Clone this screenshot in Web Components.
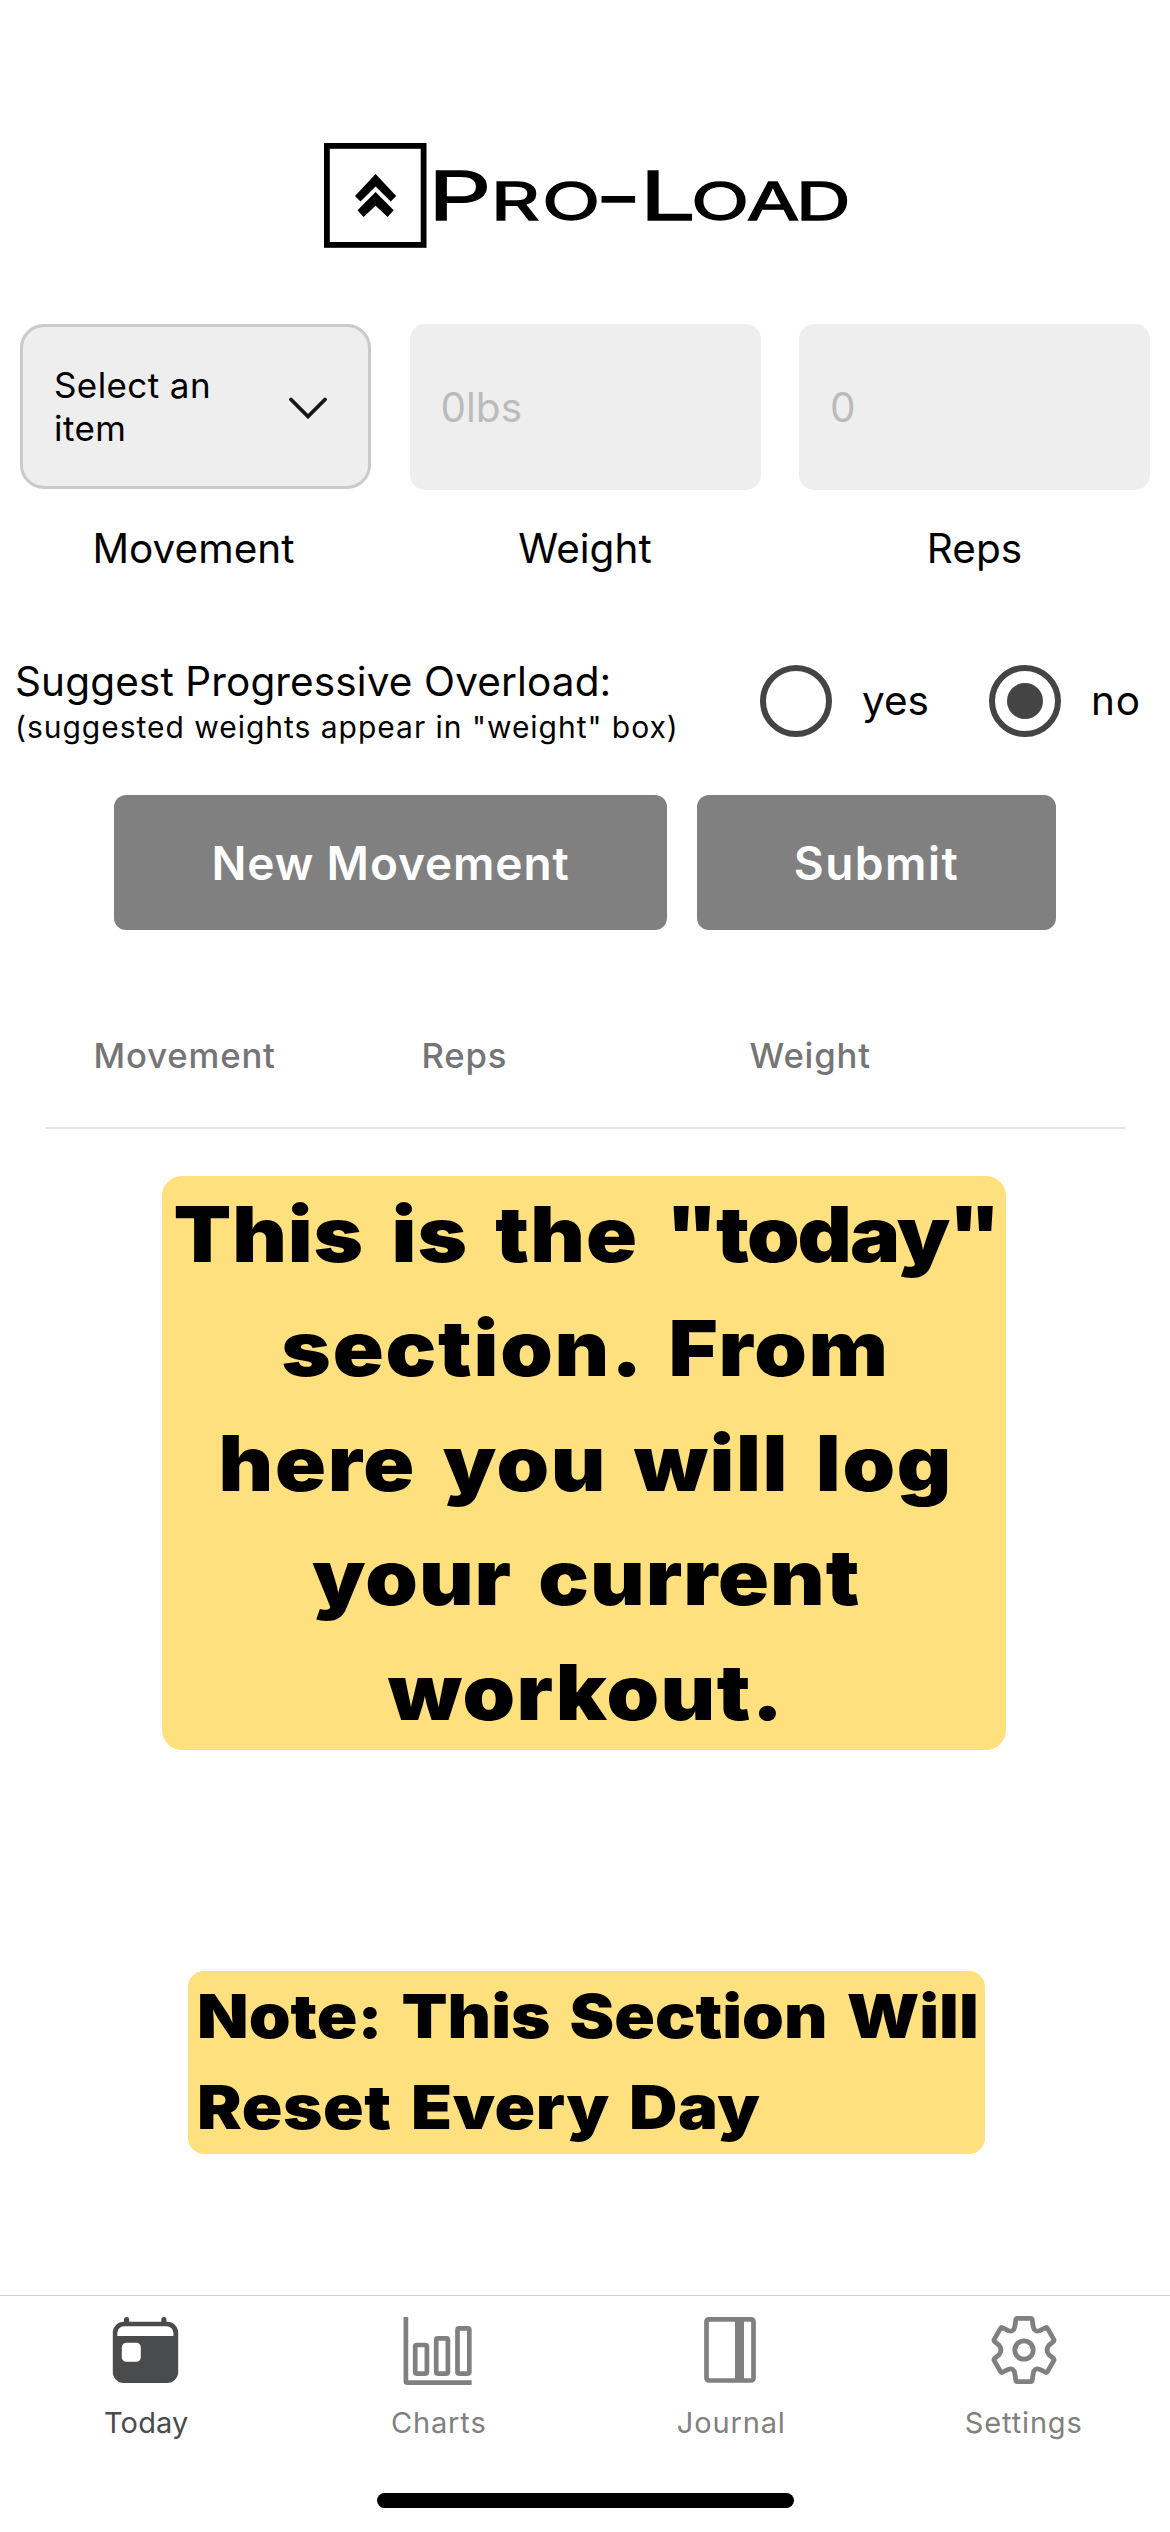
<!DOCTYPE html>
<html lang="en">
<head>
<meta charset="utf-8">
<title>Pro-Load</title>
<style>
  body { margin: 0; background: #fff; color: #000; font-family: Inter, "Liberation Sans", sans-serif; }
</style>
</head>
<body>
<pro-load-app></pro-load-app>
<script>
const define = (name, html, setup) => customElements.define(name, class extends HTMLElement {
  constructor() {
    super();
    this.attachShadow({ mode: 'open' }).innerHTML = html;
  }
  connectedCallback() { if (setup) setup.call(this, this.shadowRoot); }
});

define('brand-logo', `
  <style>
    :host { display: block; height: 181px; padding: 143px 0 0 324px; }
    svg { display: block; overflow: visible; }
    text { font-family: Inter, sans-serif; font-weight: 400; font-size: 67px; stroke: #000; stroke-width: 1.3px; }
    .s { font-size: 51.5px; }
  </style>
  <svg width="530" height="106" viewBox="0 0 530 106">
    <rect x="2.9" y="2.9" width="96.7" height="99" fill="none" stroke="#000" stroke-width="5.8"/>
    <path d="M51.6 31 72.2 53 66.7 58.5 51.6 43.5 36.5 58.5 31 53Z"/>
    <path d="M51.6 49 69.7 67.3 63.6 74 51.6 62.7 39.6 74 33.5 67.3Z"/>
    <text transform="scale(1.48 1)" x="70.2 112.6 147.3 183.5 213.3 248 285.6 318.8" y="77">P<tspan class="s">RO</tspan>-L<tspan class="s">OAD</tspan></text>
  </svg>`);

define('entry-field', `
  <style>
    :host { display: flex; flex-direction: column; color: #000; }
    .box { box-sizing: border-box; height: 166px; border-radius: 15px; background: #eee; color: #bbbbbe;
           display: flex; align-items: center; padding: 2px 0 0 31px; font-size: 40.5px; line-height: 50px; }
    .label { margin-top: 34px; font-size: 40.5px; line-height: 50px; text-align: center; }
    :host([select]) .box { height: 165px; margin-bottom: 1px; border: 3px solid #cacaca; border-radius: 24px; color: #000;
           font-size: 35px; line-height: 43px; letter-spacing: .4px; padding: 0 41px 0 31px; justify-content: space-between; }
    svg { display: none; }
    :host([select]) svg { display: block; margin-top: 2px; }
    :host([select]) .label { padding-right: 4px; }
  </style>
  <div class="box"><slot></slot>
    <svg width="38" height="22" viewBox="0 0 38 22"><path d="M2 2.5 19 19.5 36 2.5" fill="none" stroke="#151515" stroke-width="3.8" stroke-linecap="round"/></svg>
  </div>
  <div class="label"></div>`,
  function (r) { r.querySelector('.label').textContent = this.getAttribute('label'); });

define('radio-option', `
  <style>
    :host { flex: none; display: flex; align-items: center; width: 229px; gap: 30px; font-size: 40.5px; line-height: 50px; }
    i { box-sizing: border-box; width: 72px; height: 72px; border: 6px solid #444; border-radius: 50%;
        display: grid; place-items: center; }
    :host([checked]) { width: 181px; letter-spacing: .8px; }
    :host([checked]) i::after { content: ""; width: 36px; height: 36px; border-radius: 50%; background: #444; }
  </style>
  <i></i><slot></slot>`);

define('action-button', `
  <style>
    :host { display: flex; align-items: center; justify-content: center; height: 135px; border-radius: 12px;
            background: #808080; color: #fff; font-size: 46px; font-weight: 600; line-height: 56px; }
  </style><slot></slot>`);

define('log-header', `
  <style>
    :host { box-sizing: border-box; display: grid; grid-template-columns: repeat(3, 328px); height: 199px;
            margin: 0 45px; padding: 103.4px 0 0 48.5px; border-bottom: 2px solid #e5e1ef;
            color: #757576; font-size: 34.7px; font-weight: 500; line-height: 44px; letter-spacing: .85px; }
  </style><slot></slot>`);

define('tip-card', `
  <style>
    :host { box-sizing: border-box; display: flex; flex-direction: column; align-items: center;
            background: #ffe07f; font-weight: 900; white-space: nowrap; }
    :host([small]) { align-items: flex-start; }
  </style><slot></slot>`);

define('tip-line', `
  <style>
    :host { display: block; transform: scaleX(1.1); }
  </style><slot></slot>`,
  function () {
    this.style.letterSpacing = this.getAttribute('ls') + 'px';
    this.style.wordSpacing = this.getAttribute('ws') + 'px';
    if (this.parentElement.hasAttribute('small')) this.style.transformOrigin = '0 50%';
  });

const icons = {
  today: `<path fill="currentColor" fill-rule="evenodd" d="M14 7.7V5.5a2.6 2.6 0 0 1 5.2 0V7.7H51.3V5.5a2.6 2.6 0 0 1 5.2 0V7.7H57.2a11 11 0 0 1 11 11V58a11 11 0 0 1-11 11H13.8a11 11 0 0 1-11-11V18.7a11 11 0 0 1 11-11ZM14 12.2a6.7 6.7 0 0 0-6.7 6.7V22H63.4V18.9a6.7 6.7 0 0 0-6.7-6.7ZM16.3 28.7a4.5 4.5 0 0 0-4.5 4.5v10a4.5 4.5 0 0 0 4.5 4.5h10a4.5 4.5 0 0 0 4.5-4.5v-10a4.5 4.5 0 0 0-4.5-4.5Z"/>`,
  charts: `<g fill="none" stroke="currentColor" stroke-width="4.7"><path d="M2.9 3V67.2q0 1.5 1.5 1.5H68.6"/><rect x="12.2" y="31" width="11.7" height="28.6" rx="1.5"/><rect x="33.2" y="24.3" width="11.7" height="35.3" rx="1.5"/><rect x="54.5" y="14.4" width="11.8" height="45.2" rx="1.5"/></g>`,
  journal: `<rect x="11.5" y="5.3" width="47" height="61.2" rx="2.2" fill="none" stroke="currentColor" stroke-width="4.7"/><path fill="currentColor" d="M40 5h9v62h-9z"/>`,
  settings: `<g transform="translate(36 36)" fill="none" stroke="currentColor" stroke-width="4.8" stroke-linejoin="round"><path d="M-6.6-31.7H6.6Q8-31.7 8.2-30.2L9.3-23Q10.4-17.8 15.6-19.3L21.4-22.2Q22.7-22.9 23.5-21.6L29.8-10.6Q30.4-9.4 29.3-8.4L24.8-4.6Q21.4 0 24.8 4.6L29.3 8.4Q30.4 9.4 29.8 10.6L23.5 21.6Q22.7 22.9 21.4 22.2L15.6 19.3Q10.4 17.8 9.3 23L8.2 30.2Q8 31.7 6.6 31.7H-6.6Q-8 31.7-8.2 30.2L-9.3 23Q-10.4 17.8-15.6 19.3L-21.4 22.2Q-22.7 22.9-23.5 21.6L-29.8 10.6Q-30.4 9.4-29.3 8.4L-24.8 4.6Q-21.4 0-24.8-4.6L-29.3-8.4Q-30.4-9.4-29.8-10.6L-23.5-21.6Q-22.7-22.9-21.4-22.2L-15.6-19.3Q-10.4-17.8-9.3-23L-8.2-30.2Q-8-31.7-6.6-31.7Z"/><circle r="9.2"/></g>`
};

define('tab-item', `
  <style>
    :host { display: flex; flex-direction: column; align-items: center; gap: 19px; padding-top: 18px;
            color: #808080; font-size: 29px; line-height: 36px; letter-spacing: .85px; }
    :host([active]) { color: #4a4b4d; letter-spacing: .15px; }
    svg { display: block; }
  </style>
  <svg width="72" height="72" viewBox="0 0 72 72"></svg>
  <slot></slot>`,
  function (r) { r.querySelector('svg').innerHTML = icons[this.getAttribute('icon')]; });

define('tab-bar', `
  <style>
    :host { box-sizing: border-box; display: grid; grid-template-columns: repeat(4, 1fr); height: 198px; border-top: 1px solid #cfcfcf; }
  </style><slot></slot>`);

define('pro-load-app', `
  <style>
    :host { display: flex; flex-direction: column; height: 2532px; overflow: hidden; background: #fff; }
    .fields { display: grid; grid-template-columns: repeat(3, 351px); justify-content: space-between; padding: 0 20px; height: 250px; }
    .overload { display: flex; align-items: center; height: 90px; margin-top: 82px; }
    .copy { flex: none; box-sizing: border-box; width: 760px; padding-left: 15px; white-space: nowrap; }
    .q { font-size: 40.5px; line-height: 52px; letter-spacing: .13px; }
    .hint { font-size: 30px; line-height: 38px; letter-spacing: .98px; }
    .actions { display: grid; grid-template-columns: 553px 359px; gap: 30px; margin: 49px 0 0 114px; }
    .today { width: 844px; height: 574px; margin: 47px 0 0 161.5px; padding: .5px 0 0 5px; border-radius: 20px; font-size: 76.6px; line-height: 114.6px; }
    .tight { letter-spacing: -1.8px; }
    .note { width: 797px; height: 183px; margin: 221px 0 0 188px; padding-left: 8.5px; border-radius: 16px; font-size: 61px; line-height: 91.4px; }
    tab-bar { margin-top: 141px; }
    .home { width: 417px; height: 15px; margin: 0 auto; border-radius: 8px; background: #000; }
  </style>
  <brand-logo></brand-logo>
  <div class="fields">
    <entry-field select label="Movement"><span>Select an<br>item</span></entry-field>
    <entry-field label="Weight">0lbs</entry-field>
    <entry-field label="Reps">0</entry-field>
  </div>
  <div class="overload">
    <div class="copy">
      <div class="q">Suggest Progressive Overload:</div>
      <div class="hint">(suggested weights appear in "weight" box)</div>
    </div>
    <radio-option>yes</radio-option>
    <radio-option checked>no</radio-option>
  </div>
  <div class="actions">
    <action-button style="letter-spacing:.88px">New Movement</action-button>
    <action-button style="letter-spacing:1.5px">Submit</action-button>
  </div>
  <log-header><span>Movement</span><span>Reps</span><span>Weight</span></log-header>
  <tip-card class="today">
    <tip-line ls=".8" ws="9">This is the <span class="tight">"today"</span></tip-line>
    <tip-line ls="1.6" ws="9.5">section. From</tip-line>
    <tip-line ls="1.5" ws="7.5">here you will log</tip-line>
    <tip-line ls=".9" ws="7.5">your current</tip-line>
    <tip-line ls="1.3" ws="0">workout.</tip-line>
  </tip-card>
  <tip-card class="note" small>
    <tip-line ls="0" ws="5.2">Note: This Section Will</tip-line>
    <tip-line ls=".5" ws="5">Reset Every Day</tip-line>
  </tip-card>
  <tab-bar>
    <tab-item icon="today" active>Today</tab-item>
    <tab-item icon="charts">Charts</tab-item>
    <tab-item icon="journal">Journal</tab-item>
    <tab-item icon="settings">Settings</tab-item>
  </tab-bar>
  <div class="home"></div>`);
</script>
</body>
</html>
